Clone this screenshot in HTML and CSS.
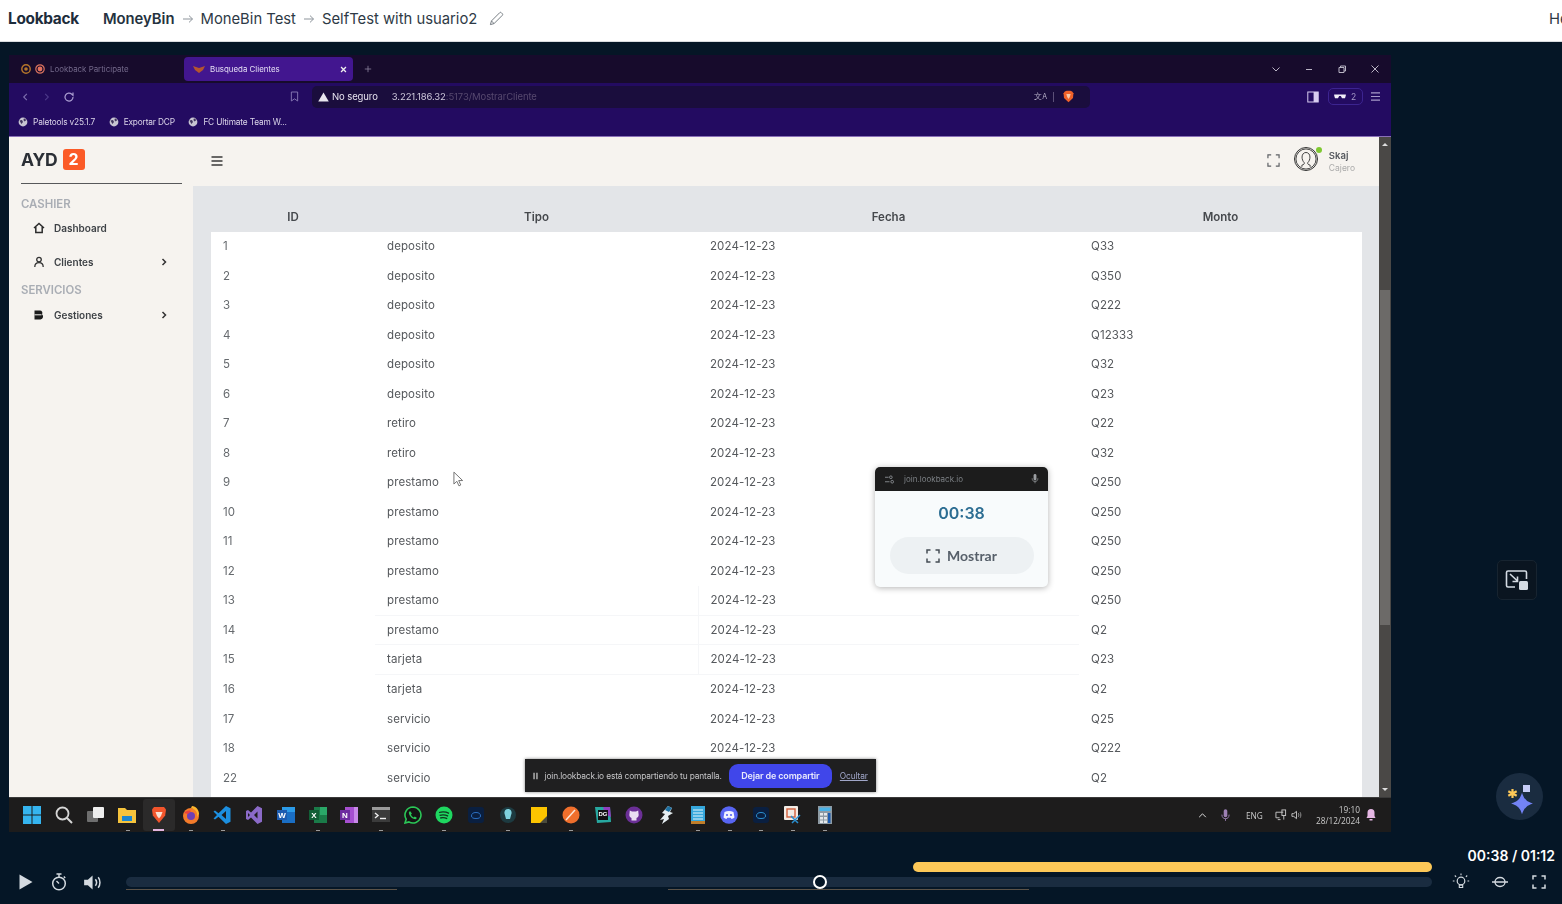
FILE: index.html
```html
<!DOCTYPE html>
<html lang="es">
<head>
<meta charset="utf-8">
<meta name="viewport" content="width=device-width, initial-scale=1">
<title>Lookback - SelfTest with usuario2</title>
<link rel="stylesheet" href="styles.css">
</head>
<body>

<!-- lookback header -->
<header class="topbar">
  <span class="brand">Lookback</span>
  <nav class="crumbs">
    <b>MoneyBin</b>
    <svg class="crumb-arrow" viewBox="0 0 12 12"><path d="M1 6h9.5M7 2.6 10.5 6 7 9.4"/></svg>
    <span>MoneBin Test</span>
    <svg class="crumb-arrow" viewBox="0 0 12 12"><path d="M1 6h9.5M7 2.6 10.5 6 7 9.4"/></svg>
    <span>SelfTest with usuario2</span>
    <svg class="pencil" viewBox="0 0 16 16"><path d="M1.5 14.5 2.6 10.6 11.4 1.8a1.2 1.2 0 0 1 1.7 0l1.1 1.1a1.2 1.2 0 0 1 0 1.7L5.4 13.4zM2.6 10.6l2.8 2.8"/></svg>
  </nav>
  <span class="cut-off">Help</span>
</header>

<main class="stage">
  <div class="screen">

    <!-- browser chrome inside the recording -->
    <div class="tabstrip">
      <svg class="fav" viewBox="0 0 10 10"><circle cx="5" cy="5" r="4.2" fill="none" stroke="#b5762a" stroke-width="1.4"/><circle cx="5" cy="5" r="1.8" fill="#b5762a"/></svg>
      <svg class="fav" viewBox="0 0 10 10"><circle cx="5" cy="5" r="4.2" fill="none" stroke="#d9735f" stroke-width="1.2"/><circle cx="5" cy="5" r="2.4" fill="#e2705c"/></svg>
      <span class="tab-idle">Lookback Participate</span>
      <div class="tab-active">
        <svg class="tab-logo" viewBox="0 0 12 8"><path d="M0 1 6 3l6-2-2 4-4 3-4-3z" fill="#b4552f"/></svg>
        <span>Busqueda Clientes</span>
        <svg class="tab-x" viewBox="0 0 8 8"><path d="m1.2 1.2 5.6 5.6M6.8 1.2 1.2 6.8"/></svg>
      </div>
      <svg class="tab-plus" viewBox="0 0 10 10"><path d="M5 1v8M1 5h8"/></svg>
      <div class="win-btns">
        <svg viewBox="0 0 10 10"><path d="m1.5 3.5 3.5 3.5 3.5-3.5"/></svg>
        <svg viewBox="0 0 10 10"><path d="M2 5.5h6"/></svg>
        <svg viewBox="0 0 10 10"><path d="M2 3.5h5v5H2zM3.5 3.5V2h5v5H7"/></svg>
        <svg viewBox="0 0 10 10"><path d="m1.5 1.5 7 7M8.5 1.5l-7 7"/></svg>
      </div>
    </div>

    <div class="toolbar">
      <svg class="nav-ic" viewBox="0 0 10 10"><path d="M6.5 1.5 3 5l3.5 3.5"/></svg>
      <svg class="nav-ic dim" viewBox="0 0 10 10"><path d="M3.5 1.5 7 5 3.5 8.5"/></svg>
      <svg class="nav-ic reload" viewBox="0 0 12 12"><path d="M10 6a4 4 0 1 1-1.2-2.8L10 4.4V1.6"/></svg>
      <svg class="bookmark" viewBox="0 0 10 12"><path d="M1.5 1h7v10L5 8.6 1.5 11z"/></svg>
      <div class="addr">
        <svg class="warn" viewBox="0 0 12 11"><path d="M6 .5 11.8 10.5H.2z" fill="#e8e6ee"/></svg>
        <span class="insecure">No seguro</span>
        <span class="url">3.221.186.32<i>:5173/MostrarCliente</i></span>
        <span class="addr-end">
          <span class="trans">文<small>A</small></span>
          <span class="addr-sep"></span>
          <svg class="shield" viewBox="0 0 12 14"><path d="M2 1.5 4 .6h4l2 .9 1.4 2-.5 5L6 13.4 1.1 8.5l-.5-5z" fill="#f0622a"/><path d="M3.6 4.4h4.8L7.4 7.6 6 9.6 4.6 7.6z" fill="#f7c7a8"/></svg>
        </span>
      </div>
      <div class="tool-end">
        <svg class="side-ic" viewBox="0 0 12 12"><rect x=".8" y="1" width="10.4" height="10" fill="none" stroke="#d8cdf0"/><rect x="6.6" y="1" width="4.6" height="10" fill="#d8cdf0"/></svg>
        <div class="glasses-pill">
          <svg viewBox="0 0 14 6"><path d="M0 .5h14v1.4l-1 3.2H9.4L8 2.4H6L4.6 5.1H1L0 1.9z" fill="#f0edf7"/></svg>
          <span>2</span>
        </div>
        <svg class="menu-ic" viewBox="0 0 12 10"><path d="M1 1h10M1 5h10M1 9h10"/></svg>
      </div>
    </div>

    <div class="bookmarks">
      <span class="bm"><svg viewBox="0 0 10 10"><circle cx="5" cy="5" r="4.4" fill="#c7c4d2"/><path d="M1.5 3.5 4 3l1 2-1.6 2zM6 1.2 8.4 3 6.6 4.6 5.4 3z" fill="#40345e"/></svg>Paletools v25.1.7</span>
      <span class="bm"><svg viewBox="0 0 10 10"><circle cx="5" cy="5" r="4.4" fill="#c7c4d2"/><path d="M1.5 3.5 4 3l1 2-1.6 2zM6 1.2 8.4 3 6.6 4.6 5.4 3z" fill="#40345e"/></svg>Exportar DCP</span>
      <span class="bm"><svg viewBox="0 0 10 10"><circle cx="5" cy="5" r="4.4" fill="#c7c4d2"/><path d="M1.5 3.5 4 3l1 2-1.6 2zM6 1.2 8.4 3 6.6 4.6 5.4 3z" fill="#40345e"/></svg>FC Ultimate Team W...</span>
    </div>

    <!-- the app being tested -->
    <div class="app">
      <aside class="sidebar">
        <div class="logo">AYD <span class="logo-badge">2</span></div>
        <hr class="side-rule">
        <div class="side-head">CASHIER</div>
        <a class="side-item">
          <svg viewBox="0 0 12 12"><path d="M1 6 6 1.4 11 6M2.8 5v5.6h6.4V5" fill="none" stroke="#2c2c2c" stroke-width="1.5"/></svg>
          Dashboard
        </a>
        <a class="side-item spaced">
          <svg viewBox="0 0 12 12"><circle cx="6" cy="3.6" r="2.3" fill="none" stroke="#333" stroke-width="1.3"/><path d="M1.8 11c0-3 1.8-4.3 4.2-4.3s4.200 1.300 4.200 4.300" fill="none" stroke="#333" stroke-width="1.3"/></svg>
          Clientes
          <svg class="side-chev" viewBox="0 0 6 8"><path d="m1.500 1 3 3-3 3"/></svg>
        </a>
        <div class="side-head second">SERVICIOS</div>
        <a class="side-item">
          <svg viewBox="0 0 12 12"><path d="M1.500 1.500h5.500a2.400 2.400 0 0 1 2 3.700 3 3 0 0 1-1.500 5.300h-6z" fill="#1c1c1c"/><path d="M1.500 5.800h7" stroke="#f6f3ef"/></svg>
          Gestiones
          <svg class="side-chev" viewBox="0 0 6 8"><path d="m1.500 1 3 3-3 3"/></svg>
        </a>
      </aside>

      <div class="app-main">
        <div class="app-top">
          <svg class="burger" viewBox="0 0 12 10"><path d="M.5 1h11M.5 5h11M.5 9h11"/></svg>
          <div class="app-user">
            <svg class="expand" viewBox="0 0 14 14"><path d="M1 4.500V1h3.500M9.500 1H13v3.500M13 9.500V13H9.500M4.500 13H1V9.500"/></svg>
            <span class="avatar">
              <svg viewBox="0 0 24 24"><circle cx="12" cy="12" r="11" fill="none"/><path d="M7.500 20.500v-1.800c2.400-.6 3-1.500 2.500-2.800-1.500-1.500-2.300-3.600-2.300-6 0-3 1.800-5 4.300-5s4.300 2 4.300 5c0 2.400-.8 4.500-2.300 6-.5 1.300.1 2.200 2.500 2.800v1.800" fill="none"/></svg>
              <i class="online"></i>
            </span>
            <span class="user-text"><b>Skaj</b><small>Cajero</small></span>
          </div>
        </div>

        <div class="table-wrap">
          <table class="movs">
            <colgroup><col class="c1"><col class="c2"><col class="c3"><col class="c4"></colgroup>
            <thead><tr><th>ID</th><th>Tipo</th><th>Fecha</th><th>Monto</th></tr></thead>
            <tbody>
              <tr><td>1</td><td>deposito</td><td>2024-12-23</td><td>Q33</td></tr>
              <tr><td>2</td><td>deposito</td><td>2024-12-23</td><td>Q350</td></tr>
              <tr><td>3</td><td>deposito</td><td>2024-12-23</td><td>Q222</td></tr>
              <tr><td>4</td><td>deposito</td><td>2024-12-23</td><td>Q12333</td></tr>
              <tr><td>5</td><td>deposito</td><td>2024-12-23</td><td>Q32</td></tr>
              <tr><td>6</td><td>deposito</td><td>2024-12-23</td><td>Q23</td></tr>
              <tr><td>7</td><td>retiro</td><td>2024-12-23</td><td>Q22</td></tr>
              <tr><td>8</td><td>retiro</td><td>2024-12-23</td><td>Q32</td></tr>
              <tr><td>9</td><td>prestamo</td><td>2024-12-23</td><td>Q250</td></tr>
              <tr><td>10</td><td>prestamo</td><td>2024-12-23</td><td>Q250</td></tr>
              <tr><td>11</td><td>prestamo</td><td>2024-12-23</td><td>Q250</td></tr>
              <tr><td>12</td><td>prestamo</td><td>2024-12-23</td><td>Q250</td></tr>
              <tr class="ghost"><td>13</td><td>prestamo</td><td>2024-12-23</td><td>Q250</td></tr>
              <tr class="ghost"><td>14</td><td>prestamo</td><td>2024-12-23</td><td>Q2</td></tr>
              <tr class="ghost"><td>15</td><td>tarjeta</td><td>2024-12-23</td><td>Q23</td></tr>
              <tr><td>16</td><td>tarjeta</td><td>2024-12-23</td><td>Q2</td></tr>
              <tr><td>17</td><td>servicio</td><td>2024-12-23</td><td>Q25</td></tr>
              <tr><td>18</td><td>servicio</td><td>2024-12-23</td><td>Q222</td></tr>
              <tr><td>22</td><td>servicio</td><td>2024-12-23</td><td>Q2</td></tr>
              <tr><td colspan="4"></td></tr>
            </tbody>
          </table>
        </div>
      </div>

      <div class="scrollbar">
        <i class="sb-up"></i>
        <i class="sb-thumb"></i>
        <i class="sb-down"></i>
      </div>
    </div>

    <!-- windows taskbar -->
    <div class="taskbar">
      <span class="task"><svg viewBox="0 0 18 18"><path d="M0 0h8.500v8.500H0zM9.500 0H18v8.500H9.500zM0 9.500h8.500V18H0zM9.500 9.500H18V18H9.500z" fill="#35b5f0"/></svg></span>
      <span class="task"><svg viewBox="0 0 18 18"><circle cx="7.500" cy="7.500" r="6" fill="none" stroke="#d6d6d6" stroke-width="1.800"/><path d="m12 12 5 5" stroke="#d6d6d6" stroke-width="2"/></svg></span>
      <span class="task"><svg viewBox="0 0 18 18"><rect x="0" y="5" width="11" height="11" rx="1" fill="#6e6e6e"/><rect x="6" y="1" width="11" height="11" rx="1" fill="#eeeeee"/></svg></span>
      <span class="task run"><svg viewBox="0 0 18 18"><path d="M0 2h7l2 2h9v13H0z" fill="#f5c33c"/><rect x="4" y="10" width="10" height="5" fill="#1a86d0"/></svg></span>
      <span class="task active"><svg viewBox="0 0 18 18"><path d="M4 1h10l2 2.500-.8 6L9 17l-6.200-7.500-.8-6z" fill="#f2552c"/><path d="M5.500 6h7L11 10l-2 2.500L7 10z" fill="#fbe1d2"/></svg></span>
      <span class="task run"><svg viewBox="0 0 18 18"><circle cx="9" cy="10" r="8" fill="#f47b2a"/><path d="M9 2c4 1 7 4 6 9l2-3c0-4-3-8-7-8z" fill="#fcb52c"/><circle cx="9" cy="10" r="4" fill="#6f3fb5"/><path d="M2 7c2-2 4-3 7-2L6 8z" fill="#e8413f"/></svg></span>
      <span class="task run"><svg viewBox="0 0 18 18"><path d="M13 0l4.500 2.200v13.600L13 18 5.500 10.800 2 13.500 .5 12.500 4 9 .5 5.500 2 4.500l3.500 2.700zM13 5l-4.500 4 4.500 4z" fill="#1c8fe0"/></svg></span>
      <span class="task"><svg viewBox="0 0 18 18"><path d="M12.500 0l4.500 2.200v13.600L12.500 18 6 11.500 3 14l-2-1V5l2-1 3 2.500zM12.500 5.500 9 9l3.500 3.500zM3 7v4l2-2z" fill="#8b6ac8"/></svg></span>
      <span class="task"><svg viewBox="0 0 18 18"><path d="M5 1h13v16H5z" fill="#1a6ec4"/><path d="M5 1h13v5H5z" fill="#2b9be8"/><rect x="0" y="4" width="10" height="10" fill="#1d5cb0"/><text x="5" y="12" class="tk-letter">W</text></svg></span>
      <span class="task run"><svg viewBox="0 0 18 18"><path d="M5 1h13v16H5z" fill="#1a7a48"/><path d="M11 1h7v8h-7z" fill="#2aa868"/><rect x="0" y="4" width="10" height="10" fill="#115f36"/><text x="5" y="12" class="tk-letter">X</text></svg></span>
      <span class="task"><svg viewBox="0 0 18 18"><path d="M5 1h13v16H5z" fill="#a64fd0"/><path d="M14 1h4v16h-4z" fill="#c888e8"/><rect x="0" y="4" width="10" height="10" fill="#6d2ba0"/><text x="5" y="12" class="tk-letter">N</text></svg></span>
      <span class="task run"><svg viewBox="0 0 18 18"><rect y="1" width="18" height="15" fill="#3b3b3b"/><rect y="1" width="18" height="3" fill="#9a9a9a"/><path d="m3 7 3 2.500L3 12" fill="none" stroke="#eee" stroke-width="1.400"/><path d="M8 12.500h6" stroke="#eee" stroke-width="1.400"/></svg></span>
      <span class="task"><svg viewBox="0 0 18 18"><path d="M9 1a8 8 0 0 0-6.800 12.200L1 17l3.900-1.100A8 8 0 1 0 9 1z" fill="#141414" stroke="#2bc757" stroke-width="1.600"/><path d="M6 5 4.800 6.500c.3 3.500 3.200 6.500 6.700 6.800L13 12l-2.200-1.500-1 .9C8.500 11 7.300 9.600 7 8.400l.9-1z" fill="#2bc757"/></svg></span>
      <span class="task run"><svg viewBox="0 0 18 18"><circle cx="9" cy="9" r="8.500" fill="#1ed760"/><path d="M4 6.500c3.500-1 7-.7 10 .8M4.600 9.300c3-.8 6-.5 8.500.8M5.200 12c2.400-.6 4.800-.4 7 .7" fill="none" stroke="#10331e" stroke-width="1.300"/></svg></span>
      <span class="task"><svg viewBox="0 0 18 18"><rect x="1" y="1" width="16" height="16" rx="3" fill="#0a1f40"/><path d="M4.500 10a4.500 3.500 0 0 1 9 0 4.500 2.500 0 0 1-9 0z" fill="none" stroke="#2b6fc0"/></svg></span>
      <span class="task run"><svg viewBox="0 0 18 18"><circle cx="9" cy="9" r="8" fill="#1d3a40"/><path d="M9 3c2.500 0 4 2 3.500 4.500L11 13H7L5.500 7.500C5 5 6.500 3 9 3z" fill="#7ed2de"/></svg></span>
      <span class="task"><svg viewBox="0 0 18 18"><rect x="1" y="1" width="16" height="16" fill="#fcc400"/><path d="M17 10v7h-7z" fill="#4a4a3c"/></svg></span>
      <span class="task run"><svg viewBox="0 0 18 18"><circle cx="9" cy="9" r="8.500" fill="#f06f2c"/><path d="m4 14 9-10" stroke="#fbe5d6" stroke-width="1.500"/></svg></span>
      <span class="task"><svg viewBox="0 0 18 18"><path d="M1 1h15l1 15-14 1z" fill="#27a8a0"/><path d="M9 1h7l1 10-6-3z" fill="#8e3fc0"/><rect x="4" y="4" width="10" height="10" fill="#111"/><text x="9" y="10" class="tk-letter dg">DG</text></svg></span>
      <span class="task"><svg viewBox="0 0 18 18"><circle cx="9" cy="9" r="8.500" fill="#6b2f96"/><path d="M6.500 14.500v-2.500C4.500 11 4 9.500 4.500 7.500L4.800 4.500l2.200 1h4l2.200-1 .3 3c.5 2 0 3.500-2 4.500v2.500" fill="#eadff2"/></svg></span>
      <span class="task"><svg viewBox="0 0 18 18"><path d="M11 0l4 2-2 4 3 1-5 3 1 3-7 5 2-5-4 1 5-6-3-1z" fill="#e6eef2"/><path d="M11 0l4 2-3 4-4-2z" fill="#1d6fa0"/></svg></span>
      <span class="task run"><svg viewBox="0 0 18 18"><rect x="2" y="0" width="14" height="18" fill="#35a7dc"/><rect x="2" y="15" width="14" height="3" fill="#c07e2a"/><path d="M4 4h10M4 7h10M4 10h10M4 13h10" stroke="#e5f5fb"/></svg></span>
      <span class="task run"><svg viewBox="0 0 18 18"><circle cx="9" cy="9" r="8.800" fill="#5865f2"/><path d="M4.500 6c3-1.500 6-1.500 9 0l1 5.500c-1 .8-2 1.200-3 1.500l-.7-1.200H7.200L6.500 13c-1-.3-2-.7-3-1.500z" fill="#f2f3ff"/><circle cx="7" cy="9" r="1.100" fill="#5865f2"/><circle cx="11" cy="9" r="1.100" fill="#5865f2"/></svg></span>
      <span class="task run"><svg viewBox="0 0 18 18"><rect x="1" y="1" width="16" height="16" rx="3" fill="#0a1f40"/><path d="M4.500 10a4.500 3.500 0 0 1 9 0 4.500 2.500 0 0 1-9 0z" fill="none" stroke="#2b8fd0"/></svg></span>
      <span class="task run"><svg viewBox="0 0 18 18"><rect x="0" y="0" width="14" height="14" rx="1" fill="#f2ece6"/><rect x="3" y="3" width="8" height="8" fill="none" stroke="#d2603c" stroke-width="1.400"/><path d="m7 10 7 7M16 9l-8 8" stroke="#2a8fd0" stroke-width="1.500"/></svg></span>
      <span class="task run"><svg viewBox="0 0 18 18"><rect x="2" y="0" width="14" height="18" fill="#8e9aa3"/><rect x="3.500" y="1.500" width="11" height="3.500" fill="#49b2e8"/><path d="M4 7h3v2.500H4zM8 7h3v2.500H8zM4 11h3v2.500H4zM8 11h3v2.500H8zM4 14.500h3V17H4zM8 14.500h3V17H8z" fill="#e4e8ea"/><rect x="12" y="7" width="2.500" height="10" fill="#1d5cb0"/></svg></span>

      <div class="tray">
        <svg class="tray-chev" viewBox="0 0 10 6"><path d="m1 5 4-4 4 4"/></svg>
        <svg class="tray-mic" viewBox="0 0 10 14"><rect x="3" y="0" width="4" height="9" rx="2" fill="#9d80b4"/><path d="M1 6c0 3 1.500 4.500 4 4.500S9 9 9 6M5 10.500V13" fill="none" stroke="#9d80b4"/></svg>
        <span class="tray-lang">ENG</span>
        <svg class="tray-net" viewBox="0 0 13 12"><path d="M9 3H1v6h4M3 11h3" fill="none" stroke="#c9c9c9"/><rect x="7.500" y=".5" width="4" height="6" fill="none" stroke="#c9c9c9"/><path d="M9.500 6.500V11" stroke="#c9c9c9"/></svg>
        <svg class="tray-vol" viewBox="0 0 12 10"><path d="M1 3.500h2L6 1v8L3 6.500H1z" fill="none" stroke="#c9c9c9"/><path d="M8 3c.7 1.200.7 2.800 0 4M10 2c1 2 1 4 0 6" fill="none" stroke="#9a9a9a"/></svg>
        <span class="tray-clock">19:10<br>28/12/2024</span>
        <svg class="tray-bell" viewBox="0 0 10 12"><path d="M5 0a3.500 3.500 0 0 0-3.500 3.500V7L.5 9h9l-1-2V3.500A3.500 3.500 0 0 0 5 0z" fill="#e6b7e4"/><path d="M3.500 10h3v1.500h-3z" fill="#e6b7e4"/></svg>
      </div>
    </div>

    <!-- overlays in the recording -->
    <svg class="rec-cursor" viewBox="0 0 12 17"><path d="M1 1v13l3.200-3 2.300 5 2-1-2.300-4.800H10.500z" fill="#fff" stroke="#6a6a6a"/></svg>

    <div class="rec-popup">
      <div class="popup-head">
        <svg class="popup-ctl" viewBox="0 0 10 10"><path d="M0 2.500h4M0 7.500h5" stroke="#8b8f94"/><circle cx="6.500" cy="2.500" r="1.500" fill="none" stroke="#8b8f94"/><circle cx="8" cy="7.500" r="1.500" fill="none" stroke="#8b8f94"/></svg>
        <span>join.lookback.io</span>
        <svg class="popup-mic" viewBox="0 0 10 14"><rect x="3" y="0" width="4" height="9" rx="2" fill="#9b9ea2"/><path d="M1 6c0 3 1.500 4.500 4 4.500S9 9 9 6M5 10.500V13" fill="none" stroke="#9b9ea2"/></svg>
      </div>
      <div class="popup-time">00:38</div>
      <div class="popup-btn">
        <svg viewBox="0 0 14 14"><path d="M1 4.500V1h3.500M9.500 1H13v3.500M13 9.500V13H9.500M4.500 13H1V9.500"/></svg>
        Mostrar
      </div>
    </div>

    <div class="rec-share">
      <svg class="share-pause" viewBox="0 0 6 8"><path d="M.5 0h1.500v8H.5zM4 0h1.500v8H4z" fill="#c9c9c9"/></svg>
      <span class="share-text">join.lookback.io está compartiendo tu pantalla.</span>
      <span class="share-btn">Dejar de compartir</span>
      <span class="share-hide">Ocultar</span>
    </div>
  </div>

  <button class="pip-btn">
    <svg viewBox="0 0 24 22"><path d="M10 18H3a1.500 1.500 0 0 1-1.500-1.500v-13A1.500 1.500 0 0 1 3 2h17a1.500 1.500 0 0 1 1.500 1.500V10" fill="none" stroke="#d3dbe3" stroke-width="1.600"/><path d="m5 5 7.500 7M7.500 12.500h5V7.500" fill="none" stroke="#d3dbe3" stroke-width="1.600"/><rect x="14" y="12" width="9" height="9" rx="1.500" fill="#d3dbe3"/></svg>
  </button>

  <button class="spark-btn">
    <svg viewBox="0 0 36 36"><path d="M10.500 10v9M6.300 12.300l8.400 4.500M14.700 12.300l-8.400 4.500" stroke="#fdc858" stroke-width="2.200"/><path d="M21 6h7v7h-7z" fill="#c6cdf7"/><path d="M20 16c1.500 4.500 4 7 8.500 8.500-4.500 1.500-7 4-8.500 8.500-1.500-4.500-4-7-8.500-8.500C16 23 18.500 20.500 20 16z" fill="#7383f5" stroke="#7383f5" stroke-width="1.500"/></svg>
  </button>
</main>

<!-- player controls -->
<footer class="player">
  <div class="player-left">
    <svg class="ic-play" viewBox="0 0 14 16"><path d="M.5.5 13.500 8 .5 15.500z" fill="#d4dae0"/></svg>
    <svg class="ic-timer" viewBox="0 0 16 18"><circle cx="8" cy="10.500" r="6.300" fill="none" stroke="#d4dae0" stroke-width="1.500"/><path d="M5.500 1h5M8 1v3M12.800 3.500l1.400 1.400M8 10.500 5.500 8" fill="none" stroke="#d4dae0" stroke-width="1.400"/></svg>
    <svg class="ic-vol" viewBox="0 0 20 16"><path d="M0 5h4l5-4.500v15L4 11H0z" fill="#d4dae0"/><path d="M12 4.500c1.500 2 1.500 5 0 7M15 2.500c2.500 3 2.500 8 0 11" fill="none" stroke="#d4dae0" stroke-width="1.600"/></svg>
  </div>

  <div class="timeline">
    <div class="tl-notes"><i class="tl-note" style="margin-left:60.26%"></i></div>
    <div class="tl-track">
      <i class="tl-knob" style="left:53.15%"></i>
    </div>
    <div class="tl-marks">
      <i style="left:0;width:20.75%"></i>
      <i style="left:41.5%;width:27.64%"></i>
    </div>
  </div>

  <div class="player-right">
    <div class="time">00:38 / 01:12</div>
    <div class="player-tools">
      <svg viewBox="0 0 18 18"><circle cx="9" cy="8" r="3.800" fill="none" stroke="#d4dae0" stroke-width="1.200"/><path d="M7.300 12h3.400v2.500H7.300zM9 .5v1.800M2.800 2.500l1.300 1.300M15.200 2.500l-1.300 1.300M.8 8h1.700M15.500 8h1.700" fill="none" stroke="#d4dae0" stroke-width="1.100"/></svg>
      <svg viewBox="0 0 18 18"><ellipse cx="9" cy="9" rx="5" ry="4.500" fill="none" stroke="#d4dae0" stroke-width="1.300"/><path d="M1 9h16" stroke="#d4dae0" stroke-width="1.500"/></svg>
      <svg viewBox="0 0 18 18"><path d="M3 6.500V3h3.500M11.500 3H15v3.500M15 11.500V15h-3.500M6.500 15H3v-3.500" fill="none" stroke="#d4dae0" stroke-width="1.500"/></svg>
    </div>
  </div>
</footer>

</body>
</html>
```

FILE: styles.css
```css
* {box-sizing: border-box;}

html, body {
  margin: 0;
  height: 100%;
}

body {
  display: flex;
  flex-direction: column;
  height: 904px;
  overflow: hidden;
  font-family: Inter, "Liberation Sans", sans-serif;
  background: #051626;
}

svg {display: block; flex: none;}

/* header */
.topbar {
  display: flex;
  align-items: center;
  height: 42px;
  padding: 0 0 4px 8px;
  flex: none;
  background: white;
  border-bottom: 1px solid #d9dcdf;
  color: #2e3a46;
  overflow: hidden;
}
.brand {
  font-size: 15.4px;
  font-weight: 700;
  letter-spacing: -0.3px;
  color: #1d2c3b;
}
.crumbs {
  display: flex;
  align-items: center;
  gap: 7px;
  margin-left: 24px;
  font-size: 14.8px;
}
.crumbs b {font-weight: 600; color: #253240;}
.crumb-arrow {
  width: 12px;
  height: 12px;
  fill: none;
  stroke: #8d949b;
  stroke-width: 1;
}
.pencil {
  width: 15px;
  height: 15px;
  margin-left: 5px;
  fill: none;
  stroke: #6d747b;
  stroke-width: 1;
}
.cut-off {
  margin-left: auto;
  width: 13px;
  overflow: hidden;
  font-size: 14.8px;
  white-space: nowrap;
}

/* stage */
.stage {
  position: relative;
  flex: none;
  height: 790px;
  padding: 13px 0 0 9px;
  background: #051626;
}
.screen {
  position: relative;
  display: flex;
  flex-direction: column;
  width: 1382px;
  height: 777px;
  overflow: hidden;
  filter: blur(0.3px);
  background: #1b1b1b;
}

/* browser */
.tabstrip {
  display: flex;
  align-items: center;
  height: 28px;
  padding-left: 12px;
  flex: none;
  background: #170b2c;
}
.fav {width: 10px; height: 10px; margin-right: 4px;}
.tab-idle {
  margin-left: 1px;
  width: 134px;
  font-size: 7.9px;
  color: #73698a;
  white-space: nowrap;
}
.tab-active {
  display: flex;
  align-items: center;
  width: 169px;
  height: 24px;
  padding: 0 6px 0 9px;
  border-radius: 4px;
  background: #42168f;
  font-size: 7.9px;
  color: #e5dff5;
}
.tab-logo {width: 12px; height: 8px; margin-right: 5px;}
.tab-x {
  width: 7px;
  height: 7px;
  margin-left: auto;
  fill: none;
  stroke: #eee;
  stroke-width: 1.5;
}
.tab-plus {
  width: 8px;
  height: 8px;
  margin-left: 11px;
  fill: none;
  stroke: #8d84a0;
}
.win-btns {
  display: flex;
  align-items: center;
  gap: 23px;
  margin-left: auto;
  padding-right: 11px;
}
.win-btns svg {
  width: 10px;
  height: 10px;
  fill: none;
  stroke: #b9b4c4;
}

.toolbar {
  display: flex;
  align-items: center;
  height: 27px;
  padding-left: 12px;
  flex: none;
  background: #230b61;
}
.nav-ic {
  width: 9px;
  height: 10px;
  margin-right: 12px;
  fill: none;
  stroke: #7f70b0;
  stroke-width: 1.2;
}
.nav-ic.dim {stroke: #4d3a8a;}
.nav-ic.reload {width: 12px; height: 12px; stroke: #a99cd0;}
.bookmark {
  width: 9px;
  height: 11px;
  margin-left: 203px;
  fill: none;
  stroke: #8b7db8;
}
.addr {
  display: flex;
  align-items: center;
  width: 778px;
  height: 22px;
  margin-left: 13px;
  padding: 0 16px 0 6px;
  border-radius: 5px;
  background: #1a0d3d;
  font-size: 9.5px;
}
.warn {width: 11px; height: 10px; margin-right: 3px;}
.insecure {color: #e6e2ee; letter-spacing: -0.1px;}
.url {margin-left: 14px; color: #cfc9dc; letter-spacing: -0.1px;}
.url i {font-style: normal; color: #57496f;}
.addr-end {
  display: flex;
  align-items: center;
  margin-left: auto;
  gap: 6px;
}
.trans {font-size: 7.5px; color: #b7b0c8; white-space: nowrap;}
.trans small {font-size: 7px;}
.addr-sep {width: 1px; height: 10px; background: #5c5078;}
.shield {width: 11px; height: 13px; margin-left: 3px;}
.tool-end {
  display: flex;
  align-items: center;
  margin-left: auto;
  padding-right: 10px;
}
.side-ic {width: 12px; height: 12px; margin-right: 9px;}
.glasses-pill {
  display: flex;
  align-items: center;
  gap: 5px;
  width: 35px;
  height: 17px;
  padding-left: 5px;
  margin-right: 7px;
  border: 1px solid #3c2490;
  border-radius: 5px;
  font-size: 8.5px;
  color: #a79cc8;
}
.glasses-pill svg {width: 12px; height: 5px;}
.menu-ic {
  width: 11px;
  height: 9px;
  fill: none;
  stroke: #a69ac8;
  stroke-width: 1.2;
}

.bookmarks {
  display: flex;
  align-items: center;
  gap: 13.5px;
  height: 27px;
  padding: 0 0 2px 9px;
  flex: none;
  background: #230b61;
  border-bottom: 1px solid #8a70b8;
  font-size: 8.3px;
  letter-spacing: -0.15px;
  color: #dcd6ea;
}
.bm {display: flex; align-items: center; gap: 5px;}
.bm svg {width: 10px; height: 10px;}

/* app */
.app {
  display: flex;
  height: 660px;
  flex: none;
  background: #f6f3ef;
}
.sidebar {
  width: 184px;
  flex: none;
  padding: 11px 11px 0 12px;
  color: #3c3f44;
}
.logo {
  display: flex;
  align-items: center;
  gap: 5px;
  height: 22px;
  font-size: 17.5px;
  font-weight: 700;
  color: #2b2f36;
  letter-spacing: -0.2px;
}
.logo-badge {
  display: flex;
  align-items: center;
  justify-content: center;
  width: 22px;
  height: 21px;
  border-radius: 3px;
  background: #fb5a27;
  color: white;
  font-size: 16px;
}
.side-rule {
  margin: 13px 0 0;
  border: none;
  border-top: 1px solid #57585a;
}
.side-head {
  margin-top: 13px;
  font-size: 11.4px;
  font-weight: 600;
  line-height: 14px;
  color: #a9adb4;
}
.side-head.second {margin-top: 13px;}
.side-item {
  display: flex;
  align-items: center;
  height: 16px;
  margin-top: 9px;
  padding-left: 12px;
  font-size: 10px;
  font-weight: 600;
  color: #3f4347;
}
.side-item.spaced {margin-top: 18px;}
.side-head.second + .side-item {margin-top: 10px;}
.side-item > svg:first-child {width: 12px; height: 12px; margin-right: 9px;}
.side-chev {
  width: 6px;
  height: 8px;
  margin-left: auto;
  margin-right: 15px;
  fill: none;
  stroke: #333;
  stroke-width: 1.5;
}

.app-main {
  display: flex;
  flex-direction: column;
  flex: 1;
  min-width: 0;
}
.app-top {
  display: flex;
  align-items: center;
  height: 49px;
  flex: none;
  padding: 0 24px 2px 18px;
}
.burger {
  width: 12px;
  height: 10px;
  fill: none;
  stroke: #3a3a3a;
  stroke-width: 1.5;
}
.app-user {
  display: flex;
  align-items: center;
  margin-left: auto;
}
.expand {
  width: 13px;
  height: 13px;
  margin-right: 14px;
  fill: none;
  stroke: #5f6266;
  stroke-width: 1.3;
}
.avatar {
  position: relative;
  display: block;
  width: 24px;
  height: 24px;
  margin: 0 11px 4px 0;
  border: 1px solid #333;
  border-radius: 50%;
}
.avatar svg {
  width: 22px;
  height: 22px;
  stroke: #333;
  stroke-width: 1;
}
.online {
  position: absolute;
  top: -1px;
  right: -5px;
  width: 6px;
  height: 6px;
  border-radius: 50%;
  background: #7fc832;
}
.user-text {display: flex; flex-direction: column; padding-top: 3px;}
.user-text b {font-size: 9.5px; font-weight: 600; color: #55585e; line-height: 12px;}
.user-text small {font-size: 8.5px; color: #aaa; line-height: 12px;}

.table-wrap {
  flex: 1;
  min-height: 0;
  padding: 0 17px 0 18px;
  overflow: hidden;
  background: #e3e5e8;
}
.movs {
  width: 1151px;
  table-layout: fixed;
  border-collapse: collapse;
  font-size: 11.5px;
  color: #55585c;
}
.c1 {width: 164px;}
.c2 {width: 323px;}
.c3 {width: 381px;}
.movs th {
  height: 45.5px;
  padding: 16px 0 0;
  font-size: 11.5px;
  font-weight: 600;
  color: #45484c;
}
.movs td {
  height: 29.53px;
  padding: 0 0 0 12px;
  background: white;
  letter-spacing: 0.1px;
}
.movs td:first-child {color: #666a6e;}
.ghost td:nth-child(2), .ghost td:nth-child(3) {border-bottom: 1px solid #f5f6f8;}
.ghost td:nth-child(3) {border-left: 1px solid #f5f6f8;}

.scrollbar {
  display: flex;
  flex-direction: column;
  align-items: center;
  width: 12px;
  flex: none;
  background: #4a4846;
}
.sb-up, .sb-down {
  width: 0;
  height: 0;
  margin: 6px 0;
  border: 3px solid transparent;
}
.sb-up {border-top: 0; border-bottom: 3px solid #ddd;}
.sb-down {border-bottom: 0; border-top: 3px solid #ddd; margin-top: auto;}
.sb-thumb {
  width: 10px;
  height: 335px;
  margin-top: 138px;
  background: #6c6a68;
}

/* taskbar */
.taskbar {
  display: flex;
  align-items: center;
  flex: 1;
  padding-left: 7.5px;
  background: #1d1c1c;
  border-top: 1px solid #3a3a3a;
}
.task {
  position: relative;
  display: flex;
  align-items: center;
  justify-content: center;
  width: 31.7px;
  height: 32px;
  flex: none;
  padding-bottom: 1px;
}
.task svg {width: 18px; height: 18px;}
.tk-letter {
  font-family: "Liberation Sans", sans-serif;
  font-size: 8px;
  font-weight: 700;
  fill: white;
  text-anchor: middle;
}
.tk-letter.dg {font-size: 6px;}
.task.run::after, .task.active::after {
  content: "";
  position: absolute;
  bottom: 0;
  left: 14px;
  width: 4px;
  height: 1px;
  background: #9a9a9a;
}
.task.active {border-radius: 3px; background: #2b2a2a;}
.task.active::after {left: 10px; width: 11px; height: 2px; background: #e3b5e0;}
.tray {
  display: flex;
  align-items: center;
  margin-left: auto;
  padding-right: 15px;
  color: #c9c9c9;
  font-family: "Open Sans", sans-serif;
}
.tray-chev {width: 9px; height: 5px; margin-right: 14px; fill: none; stroke: #ddd; stroke-width: 1.2;}
.tray-mic {width: 9px; height: 13px; margin-right: 16px;}
.tray-lang {width: 18px; margin-right: 11px; font-size: 8.3px;}
.tray-net {width: 12px; height: 12px; margin-right: 4px;}
.tray-vol {width: 11px; height: 10px; margin-right: 12px;}
.tray-clock {
  width: 46px;
  font-size: 8.3px;
  line-height: 11px;
  text-align: right;
}
.tray-bell {width: 10px; height: 12px; margin-left: 6px;}

/* overlays in the recording */
.rec-cursor {
  position: absolute;
  left: 444px;
  top: 416px;
  width: 11px;
  height: 16px;
}
.rec-popup {
  position: absolute;
  left: 866px;
  top: 412px;
  width: 173px;
  height: 120px;
  overflow: hidden;
  border-radius: 5px;
  background: #f8fbfc;
  box-shadow: 0 1px 6px rgba(0, 0, 0, 0.3);
}
.popup-head {
  display: flex;
  align-items: center;
  height: 24px;
  padding: 0 9px 0 10px;
  background: #1c1c1c;
  font-size: 8px;
  color: #7c8085;
}
.popup-ctl {width: 9px; height: 9px; margin-right: 10px;}
.popup-mic {width: 8px; height: 10px; margin-left: auto;}
.popup-time {
  margin-top: 11px;
  text-align: center;
  font-size: 16px;
  font-weight: 600;
  line-height: 22px;
  color: #2c6d92;
}
.popup-btn {
  display: flex;
  align-items: center;
  justify-content: center;
  gap: 7px;
  width: 144px;
  height: 37px;
  margin: 13px auto 0;
  border-radius: 19px;
  background: #edf1f3;
  font-family: Lato, sans-serif;
  font-size: 14px;
  font-weight: 700;
  color: #565f69;
}
.popup-btn svg {
  width: 14px;
  height: 14px;
  fill: none;
  stroke: #444c54;
  stroke-width: 1.5;
}
.rec-share {
  position: absolute;
  left: 516px;
  top: 704px;
  display: flex;
  align-items: center;
  width: 351px;
  height: 33px;
  padding-left: 7.5px;
  background: #1f1f20;
  box-shadow: 0 0 3px rgba(0, 0, 0, 0.5);
  font-size: 8.4px;
  letter-spacing: -0.15px;
  color: #c5c5c7;
}
.share-pause {width: 5px; height: 8px; margin-right: 7px;}
.share-btn {
  display: flex;
  align-items: center;
  justify-content: center;
  width: 103px;
  height: 24px;
  margin-left: 7px;
  border-radius: 9px;
  background: #4046ea;
  font-weight: 600;
  font-size: 9px;
  color: #e8e9fc;
}
.share-hide {
  margin-left: 8px;
  text-decoration: underline;
  color: #a0a6c8;
}

/* floating buttons */
.pip-btn {
  position: absolute;
  left: 1497px;
  top: 518px;
  display: flex;
  align-items: center;
  justify-content: center;
  width: 40px;
  height: 40px;
  padding: 0;
  border: 1px solid #172430;
  border-radius: 5px;
  background: #0a1520;
}
.pip-btn svg {width: 24px; height: 22px;}
.spark-btn {
  position: absolute;
  left: 1496px;
  top: 731px;
  display: flex;
  align-items: center;
  justify-content: center;
  width: 47px;
  height: 47px;
  padding: 0;
  border: none;
  border-radius: 50%;
  background: #1a2c40;
}
.spark-btn svg {width: 36px; height: 36px;}

/* player */
.player {
  display: flex;
  flex: 1;
  min-height: 0;
  background: #051626;
}
.player-left {
  display: flex;
  align-items: center;
  width: 126px;
  flex: none;
  height: 100%;
  padding: 28px 0 0 19px;
}
.ic-play {width: 14px; height: 16px; margin-right: 18px;}
.ic-timer {width: 16px; height: 18px; margin-right: 17px;}
.ic-vol {width: 19px; height: 15px;}

.timeline {
  display: flex;
  flex-direction: column;
  flex: 1;
  padding-top: 30px;
}
.tl-notes {height: 10px;}
.tl-note {
  display: block;
  height: 10px;
  border-radius: 5px;
  background: #fdc858;
}
.tl-track {
  position: relative;
  height: 10px;
  margin-top: 5px;
  border-radius: 5px;
  background: #1a2c40;
}
.tl-knob {
  position: absolute;
  top: -2px;
  width: 14px;
  height: 14px;
  margin-left: -7px;
  border: 2px solid white;
  border-radius: 50%;
  background: #051626;
}
.tl-marks {
  position: relative;
  height: 1px;
  margin-top: 2px;
}
.tl-marks i {
  position: absolute;
  top: 0;
  height: 1px;
  background: #5c5348;
}

.player-right {
  width: 130px;
  flex: none;
  padding: 16px 7px 0 0;
}
.time {
  height: 16px;
  text-align: right;
  font-size: 14px;
  font-weight: 600;
  line-height: 16px;
  color: white;
}
.player-tools {
  display: flex;
  justify-content: space-between;
  margin-top: 9px;
  padding: 0 7px 0 20px;
}
.player-tools svg {width: 18px; height: 18px;}
```
